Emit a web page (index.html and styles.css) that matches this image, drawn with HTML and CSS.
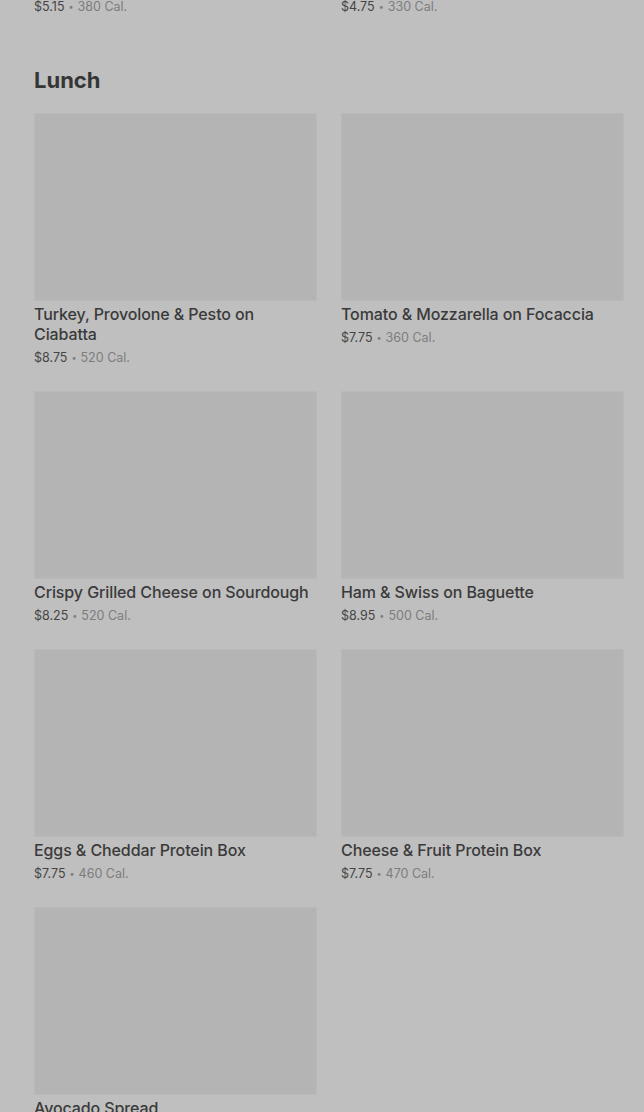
FILE: index.html
```html
<!DOCTYPE html>
<html>
<head>
<meta charset="utf-8">
<link rel="stylesheet" href="styles.css">
</head>
<body>
<main class="menu">
  <div class="grid tail">
    <div class="meta"><span class="price">$5.15</span><span class="dot">•</span><span class="cal">380 Cal.</span></div>
    <div class="meta"><span class="price">$4.75</span><span class="dot">•</span><span class="cal">330 Cal.</span></div>
  </div>
  <section class="section">
    <h2 class="heading">Lunch</h2>
    <div class="grid">
      <div class="card"><div class="thumb"></div><div class="title">Turkey, Provolone &amp; Pesto on Ciabatta</div><div class="meta"><span class="price">$8.75</span><span class="dot">•</span><span class="cal">520 Cal.</span></div></div>
      <div class="card"><div class="thumb"></div><div class="title">Tomato &amp; Mozzarella on Focaccia</div><div class="meta"><span class="price">$7.75</span><span class="dot">•</span><span class="cal">360 Cal.</span></div></div>
      <div class="card"><div class="thumb"></div><div class="title">Crispy Grilled Cheese on Sourdough</div><div class="meta"><span class="price">$8.25</span><span class="dot">•</span><span class="cal">520 Cal.</span></div></div>
      <div class="card"><div class="thumb"></div><div class="title">Ham &amp; Swiss on Baguette</div><div class="meta"><span class="price">$8.95</span><span class="dot">•</span><span class="cal">500 Cal.</span></div></div>
      <div class="card"><div class="thumb"></div><div class="title">Eggs &amp; Cheddar Protein Box</div><div class="meta"><span class="price">$7.75</span><span class="dot">•</span><span class="cal">460 Cal.</span></div></div>
      <div class="card"><div class="thumb"></div><div class="title">Cheese &amp; Fruit Protein Box</div><div class="meta"><span class="price">$7.75</span><span class="dot">•</span><span class="cal">470 Cal.</span></div></div>
      <div class="card"><div class="thumb"></div><div class="title">Avocado Spread</div></div>
    </div>
  </section>
</main>
</body>
</html>
```
FILE: styles.css
```css
html, body {
  margin: 0;
  padding: 0;
  background: #bfbfbf;
  overflow: hidden;
}
body {
  font-family: "Inter", "Liberation Sans", sans-serif;
  color: #3a3a3a;
}
.menu {
  padding: 0 20px 0 34px;
  margin-top: -3px;
}
.grid {
  display: grid;
  grid-template-columns: 283px 283px;
  column-gap: 24px;
  row-gap: 23px;
}
.tail .meta { margin-top: 0; }
.section {
  margin-top: 47px;
}
.heading {
  margin: 0 0 17px;
  font-size: 22px;
  line-height: 32px;
  font-weight: 700;
  color: #363636;
}
.thumb {
  height: 188px;
  background: #b4b4b4;
  box-sizing: border-box;
  border: 1px solid #b9b9b9;
}
.title {
  margin-top: 3px;
  font-size: 16px;
  line-height: 20px;
  font-weight: 500;
  letter-spacing: -0.1px;
  color: #3a3a3a;
}
.meta {
  margin-top: 4px;
  font-size: 12.5px;
  line-height: 20px;
  display: flex;
  align-items: center;
  gap: 4px;
}
.price { color: #454545; }
.dot { color: #7d7d7d; font-size: 9px; }
.cal { color: #7d7d7d; }
```
